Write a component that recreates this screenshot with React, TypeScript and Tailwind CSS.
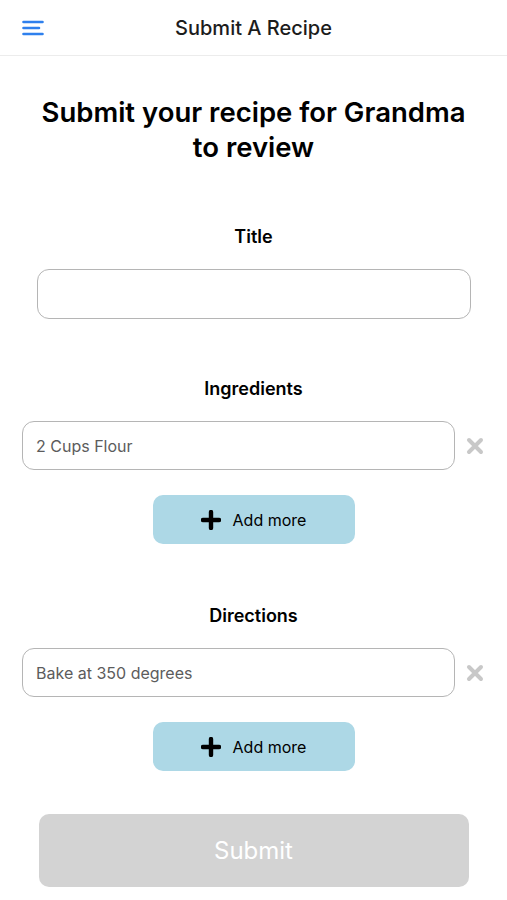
import { useState } from "react";

const MenuIcon = () => (
  <svg width="22" height="16" viewBox="0 0 22 16" fill="none">
    <path d="M1.5 2h19M1.5 8h15.5M1.5 14h19" stroke="#2f80ed" strokeWidth="2.6" strokeLinecap="round" />
  </svg>
);

const PlusIcon = () => (
  <svg width="20" height="20" viewBox="0 0 20 20">
    <path d="M10 2v16M2 10h16" stroke="#000" strokeWidth="4.4" strokeLinecap="round" />
  </svg>
);

const CloseIcon = () => (
  <svg width="18" height="18" viewBox="0 0 18 18">
    <path d="M3 3l12 12M15 3L3 15" stroke="#c8c8c8" strokeWidth="4" strokeLinecap="round" />
  </svg>
);

type ListProps = {
  label: string;
  items: string[];
  setItems: (v: string[]) => void;
};

const ListField = ({ label, items, setItems }: ListProps) => (
  <div className="flex flex-col items-center">
    <h2 className="text-[18px] font-semibold text-black leading-[24px]">{label}</h2>
    <div className="mt-[20px] flex w-full flex-col gap-3">
      {items.map((item, i) => (
        <div key={i} className="flex items-center pl-[22px] pr-[22px]">
          <input
            value={item}
            onChange={(e) => {
              const next = [...items];
              next[i] = e.target.value;
              setItems(next);
            }}
            className="h-[49px] flex-1 rounded-[12px] border border-[#b5b5b5] px-[13px] text-[16px] text-[#5c5c5c] outline-none"
          />
          <button
            aria-label="Remove"
            onClick={() => setItems(items.filter((_, j) => j !== i))}
            className="ml-[10px] flex h-[20px] w-[20px] items-center justify-center"
          >
            <CloseIcon />
          </button>
        </div>
      ))}
    </div>
    <button
      onClick={() => setItems([...items, ""])}
      className="mt-[25px] flex h-[49px] w-[202px] items-center justify-center gap-[12px] rounded-[10px] bg-[#add8e6] text-[16px] text-black"
    >
      <PlusIcon />
      <span>Add more</span>
    </button>
  </div>
);

export default function App() {
  const [title, setTitle] = useState("");
  const [ingredients, setIngredients] = useState(["2 Cups Flour"]);
  const [directions, setDirections] = useState(["Bake at 350 degrees"]);

  return (
    <div className="min-h-[900px] w-full bg-white font-['Inter',sans-serif]">
      <header className="relative flex h-[56px] items-center justify-center border-b border-[#ececec]">
        <button aria-label="Menu" className="absolute left-[22px] top-[20px]">
          <MenuIcon />
        </button>
        <h1 className="text-[20px] font-medium text-[#1c1c1c]">Submit A Recipe</h1>
      </header>

      <main className="flex flex-col">
        <h2 className="mt-[39px] px-[30px] text-center text-[27.5px] font-semibold leading-[35px] text-black">
          Submit your recipe for Grandma to review
        </h2>

        <div className="mt-[60px] flex flex-col items-center">
          <h2 className="text-[18px] font-semibold leading-[24px] text-black">Title</h2>
          <input
            value={title}
            onChange={(e) => setTitle(e.target.value)}
            className="mt-[20px] h-[50px] w-[434px] rounded-[12px] border border-[#b5b5b5] px-[13px] text-[16px] outline-none"
          />
        </div>

        <div className="mt-[58px]">
          <ListField label="Ingredients" items={ingredients} setItems={setIngredients} />
        </div>

        <div className="mt-[60px]">
          <ListField label="Directions" items={directions} setItems={setDirections} />
        </div>

        <div className="mt-[43px] flex justify-center">
          <button
            disabled
            className="h-[73px] w-[430px] rounded-[10px] bg-[#d3d3d3] text-[24px] text-white"
          >
            Submit
          </button>
        </div>
      </main>
    </div>
  );
}
